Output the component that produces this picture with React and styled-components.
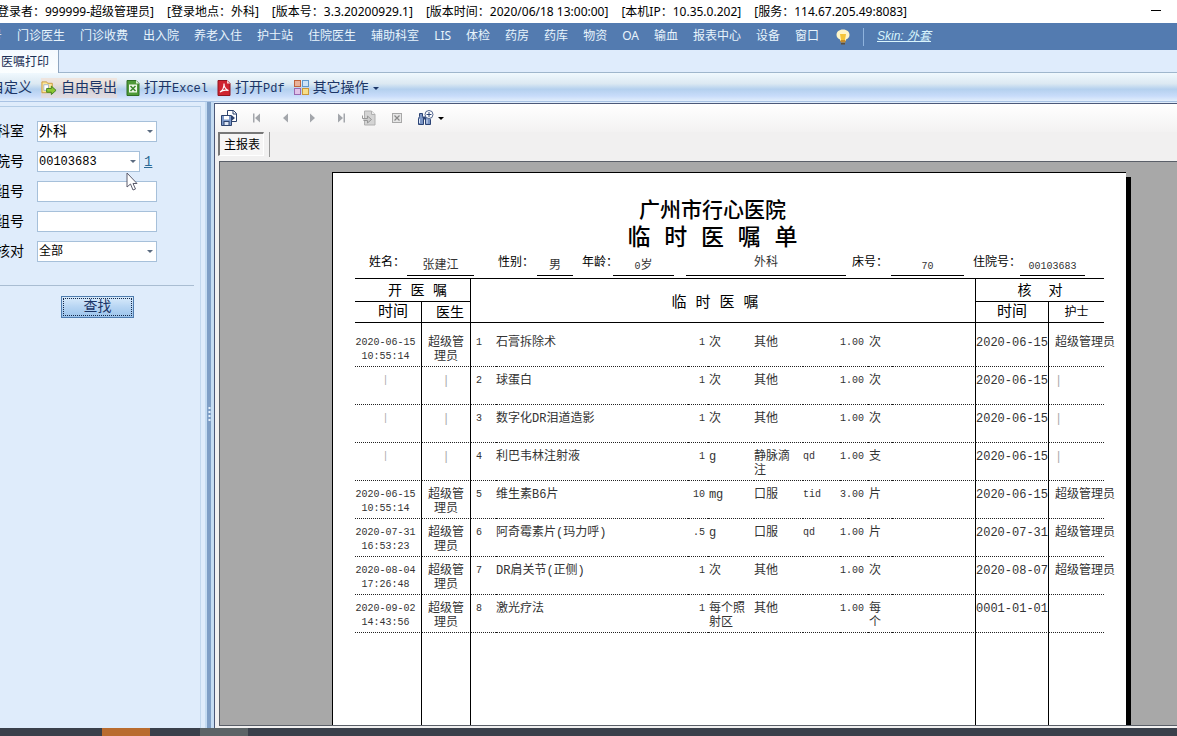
import React, { useState } from 'react';
import styled, { createGlobalStyle } from 'styled-components';

const GlobalStyle = createGlobalStyle`
  * {
    box-sizing: border-box;
  }

  body {
    margin: 0;
    overflow: hidden;
    font-family: 'Noto Sans', 'Noto Sans CJK SC', sans-serif;
    font-size: 12px;
    line-height: 16px;
    color: #000;
  }
`;

const songFont = `'Liberation Mono', 'Noto Sans CJK SC', monospace`;

const Window = styled.div`
  display: flex;
  flex-direction: column;
  height: 100vh;
  background: #dfecfb;
`;

// Title bar
const TitleBar = styled.header`
  display: flex;
  justify-content: space-between;
  height: 23px;
  flex: none;
  padding-top: 4px;
  padding-right: 15px;
  background: #fff;
  white-space: nowrap;
`;

const TitleInfo = styled.div`
  display: flex;
  gap: 13px;
  margin-left: -7px;
`;

const MinimizeButton = styled.button`
  width: 12px;
  height: 16px;
  padding: 0;
  border: none;
  background: none;

  svg {
    display: block;
  }
`;

// Menu
const MenuBar = styled.nav`
  display: flex;
  align-items: center;
  gap: 15px;
  height: 27px;
  flex: none;
  margin-left: -22px;
  background: #537bb0;
  color: #e8f4fc;
  white-space: nowrap;
`;

const MenuItem = styled.button`
  padding: 0 0 2px;
  border: none;
  background: none;
  color: inherit;
  font: inherit;
  line-height: 16px;
`;

const MenuTools = styled.div`
  display: flex;
  align-items: center;
  gap: 13px;
  margin-left: 2px;
`;

const MenuDivider = styled.span`
  width: 1px;
  height: 18px;
  background: #8fb3dd;
`;

const SkinLink = styled.a`
  color: #d8f4fc;
  font-family: 'Liberation Sans', 'Noto Sans CJK SC', sans-serif;
  font-style: italic;
  line-height: 20px;
  padding-bottom: 2px;
  text-decoration: underline;
`;

// Document tabs
const TabStrip = styled.div`
  display: flex;
  height: 23px;
  flex: none;
  border-bottom: 1px solid #9fb6cc;
  background: #dfecfc;
`;

const DocTab = styled.button`
  height: 23px;
  padding: 1px 9px 0 1px;
  border: none;
  border-right: 1px solid #8fa6c0;
  background: linear-gradient(#f4f9fe, #fbfeff);
  color: #1b2f55;
  font: inherit;
`;

const ActionBar = styled.div`
  display: flex;
  align-items: center;
  height: 29px;
  flex: none;
  gap: 9px;
  margin-left: -10px;
  padding-top: 2px;
  border-bottom: 1px solid #a9c3e4;
  background: linear-gradient(#f0f9fe 0%, #dce9f2 38%, #b4d0ee 58%, #c8dcfa 82%, #e2eefc 100%);
  white-space: nowrap;
`;

const Action = styled.button`
  display: flex;
  align-items: center;
  gap: 4px;
  padding: 0;
  border: none;
  background: ${(props) => (props.$active ? 'rgba(250, 214, 190, 0.45)' : 'none')};
  color: #1b3566;
  font: 14px/20px ${songFont};

  svg {
    flex: none;
  }
`;

const Latin = styled.span`
  font-size: 12px;
`;

// Body
const Body = styled.main`
  display: flex;
  flex: 1;
  min-height: 0;
`;

const SidePanel = styled.aside`
  width: 205px;
  flex: none;
  padding: 4px 4px 0 0;
`;

const FilterForm = styled.form`
  height: 100%;
  border-top: 1px solid #b4cde6;
  border-right: 1px solid #c3d8ee;
`;

const Fields = styled.div`
  display: grid;
  gap: 9px;
  margin-right: 6px;
  padding: 14px 0 23px;
  border-bottom: 1px solid #a9bdd2;
`;

const Field = styled.div`
  display: flex;
  align-items: center;
  height: 21px;
`;

const FieldLabel = styled.label`
  display: flex;
  justify-content: flex-end;
  width: 24px;
  margin-right: 13px;
  padding-top: 2px;
  font: 14px/21px ${songFont};
  white-space: nowrap;
`;

const ComboBox = styled.div`
  display: grid;
  align-items: center;
  width: ${(props) => (props.$short ? 103 : 120)}px;

  > * {
    grid-area: 1 / 1;
  }

  svg {
    justify-self: end;
    margin-right: 4px;
    pointer-events: none;
  }
`;

const Select = styled.select`
  appearance: none;
  width: 100%;
  height: 21px;
  padding: 1px 1px 0;
  border: 1px solid #a6c0da;
  border-radius: 0;
  background: #fff;
  color: #000;
  font: ${(props) => props.$size}px/18px ${songFont};
`;

const TextInput = styled.input`
  width: 120px;
  height: 21px;
  padding: 0 2px;
  border: 1px solid #a6c0da;
  background: #fff;
  font: 12px/19px ${songFont};
`;

const CountLink = styled.a`
  margin-left: 4px;
  color: #2c6a96;
  font: 14px/18px 'Liberation Mono', monospace;
`;

const SearchButton = styled.button`
  display: block;
  width: 73px;
  height: 22px;
  margin: 10px 0 0 61px;
  padding: 1px;
  border: 1px solid #4f7cae;
  background: linear-gradient(#d9ebfb, #b7d5f3 50%, #9cc4ec);
  color: #1b3566;
  font: 14px/17px ${songFont};

  span {
    display: block;
    height: 18px;
    border: 1px dotted #16284a;
  }
`;

const Splitter = styled.div`
  display: flex;
  align-items: center;
  justify-content: center;
  width: 9px;
  flex: none;
  border: solid #c5dcf2;
  border-width: 0 3px 0 2px;
  background: #7f9fc6;

  svg {
    flex: none;
  }
`;

// Report viewer
const Viewer = styled.section`
  display: flex;
  flex-direction: column;
  flex: 1;
  min-width: 0;
  margin-top: 1px;
  border-top: 1px solid #4b5878;
  border-left: 1px solid #4b5878;
  background: #f1f0f0;
`;

const ViewerBar = styled.div`
  display: flex;
  align-items: center;
  gap: 12px;
  height: 28px;
  flex: none;
  padding-left: 6px;
  background: linear-gradient(#fff, #f3f2f2);
`;

const IconButton = styled.button`
  display: flex;
  align-items: center;
  gap: 4px;
  padding: 0;
  border: none;
  background: none;
`;

const ReportTabs = styled.div`
  display: flex;
  gap: 5px;
  height: 29px;
  flex: none;
  padding-left: 3px;
`;

const ReportTab = styled.button`
  height: 24px;
  padding: 1px 3px 0 4px;
  border: solid;
  border-width: 2px 1px 1px 2px;
  border-color: #777 #fff #fff #777;
  background: #f6f5f5;
  font: inherit;
`;

const TabDivider = styled.span`
  width: 1px;
  height: 25px;
  background: #999;
`;

const Canvas = styled.div`
  display: flex;
  flex: 1;
  min-height: 0;
  margin: 0 0 2px 4px;
  padding: 10px 51px 0 112px;
  overflow: hidden;
  border: solid #5a5f68;
  border-width: 1px 0 1px 1px;
  background: #a8a8a8;
`;

const Page = styled.article`
  display: flex;
  flex-direction: column;
  flex: 1;
  padding: 24px 22px 0;
  border: solid #000;
  border-width: 1px 0 0 1px;
  background: #fff;
  box-shadow: 5px 5px 0 #000;
  font-family: ${songFont};
`;

const Heading = styled.header`
  height: 54px;
  margin-right: 34px;
  padding-top: 1px;
  text-align: center;
`;

const Hospital = styled.h1`
  margin: 0;
  font: 500 21px/27px ${songFont};
`;

const ReportTitle = styled.h2`
  margin: 0;
  font: 500 23px/28px ${songFont};
`;

const Patient = styled.dl`
  display: grid;
  grid-template-columns: 38px 67px 63px 36px 40px 61px 1fr 45px 73px 56px 65px;
  height: 24px;
  margin: 0 19px 3px 14px;
`;

const Term = styled.dt`
  padding: 4px 0 0 ${(props) => props.$indent || 0}px;
  white-space: nowrap;
`;

const Detail = styled.dd`
  margin: 0 0 0 ${(props) => props.$indent || 0}px;
  padding-top: ${(props) => (props.$raised ? 4 : 7)}px;
  border-bottom: 1px solid #000;
  color: #333;
  line-height: 16px;
  text-align: center;

  span {
    font-size: 10px;
  }
`;

const OrderTable = styled.table`
  flex: 1;
  width: 100%;
  table-layout: fixed;
  border-spacing: 0;
  border-top: 1px solid #000;
  font-size: 12px;
  line-height: 14px;
`;

const Th = styled.th`
  height: ${(props) => (props.$sub ? 21 : 23)}px;
  padding: ${(props) => props.$top || 1}px ${(props) => props.$right || 0}px 0 ${(props) => props.$left || 0}px;
  border: solid #000;
  border-width: 0 ${(props) => (props.$last ? 0 : 1)}px 1px 0;
  font-size: ${(props) => props.$size || 14}px;
  font-weight: 400;
  line-height: 18px;
  white-space: pre;
`;

const Row = styled.tr`
  height: ${(props) => (props.$first ? 44 : 38)}px;

  td {
    padding-top: ${(props) => (props.$first ? 13 : 7)}px;
  }
`;

const Td = styled.td`
  padding: 0 ${(props) => props.$right || 0}px 0 ${(props) => props.$left || 0}px;
  border: 0 solid #000;
  border-right-width: ${(props) => (props.$line ? 1 : 0)}px;
  border-bottom: 1px dotted #222;
  color: ${(props) => (props.$dim ? '#aaa' : '#333')};
  text-align: ${(props) => props.$align || 'left'};
  vertical-align: top;
  white-space: ${(props) => (props.$wrap ? 'normal' : 'nowrap')};
`;

const Small = styled(Td)`
  font-size: 10px;
`;

const Blank = styled.td`
  padding: 0;
  border-right: ${(props) => (props.$last ? 'none' : '1px solid #000')};
`;

const Taskbar = styled.footer`
  display: flex;
  gap: 50px;
  height: 8px;
  flex: none;
  padding-left: 102px;
  background: #3a404b;
`;

const TaskButton = styled.button`
  width: 48px;
  height: 8px;
  padding: 0;
  border: none;
  background: ${(props) => props.$color};
`;

const Pointer = styled.svg`
  position: absolute;
  left: 126px;
  top: 172px;
`;

const menus = [
  '挂号', '门诊医生', '门诊收费', '出入院', '养老入住', '护士站', '住院医生', '辅助科室', 'LIS',
  '体检', '药房', '药库', '物资', 'OA', '输血', '报表中心', '设备', '窗口',
];

const status = [
  '[登录者：999999-超级管理员]',
  '[登录地点：外科]',
  '[版本号：3.3.20200929.1]',
  '[版本时间：2020/06/18 13:00:00]',
  '[本机IP：10.35.0.202]',
  '[服务：114.67.205.49:8083]',
];

const admin = '超级管理员';

const orders = [
  { time: '2020-06-15 10:55:14', name: '石膏拆除术', dose: '1', unit: '次', route: '其他', qty: '1.00', pack: '次', check: '2020-06-15', nurse: admin },
  { name: '球蛋白', dose: '1', unit: '次', route: '其他', qty: '1.00', pack: '次', check: '2020-06-15' },
  { name: '数字化DR泪道造影', dose: '1', unit: '次', route: '其他', qty: '1.00', pack: '次', check: '2020-06-15' },
  { name: '利巴韦林注射液', dose: '1', unit: 'g', route: '静脉滴注', freq: 'qd', qty: '1.00', pack: '支', check: '2020-06-15' },
  { time: '2020-06-15 10:55:14', name: '维生素B6片', dose: '10', unit: 'mg', route: '口服', freq: 'tid', qty: '3.00', pack: '片', check: '2020-06-15', nurse: admin },
  { time: '2020-07-31 16:53:23', name: '阿奇霉素片(玛力呼)', dose: '.5', unit: 'g', route: '口服', freq: 'qd', qty: '1.00', pack: '片', check: '2020-07-31', nurse: admin },
  { time: '2020-08-04 17:26:48', name: 'DR肩关节(正侧)', dose: '1', unit: '次', route: '其他', qty: '1.00', pack: '次', check: '2020-08-07', nurse: admin },
  { time: '2020-09-02 14:43:56', name: '激光疗法', dose: '1', unit: '每个照射区', route: '其他', qty: '1.00', pack: '每个', check: '0001-01-01', nurse: ' ' },
];

const columns = [67, 49, 25, null, 20, 46, 49, 37, 28, 24, 84, 73, 55];

const BulbIcon = () => (
  <svg width="14" height="16" viewBox="0 0 14 16">
    <path d="M7 .5C3 .5.500 2.800.500 6c0 2.300 1.500 3.500 3.500 4.500V12h6v-1.500c2-1 3.500-2.200 3.500-4.500C13.500 2.800 11 .5 7 .5z" fill="#fff6c8" />
    <path d="M4 5h6l-1 6H5z" fill="#f4c53a" />
    <path d="M4.500 11h5v2.500h-5z" fill="#c78d2a" />
    <path d="M5 14h4v1.500H5z" fill="#5d4d3a" />
  </svg>
);

const ExportIcon = () => (
  <svg width="16" height="16" viewBox="0 0 17 16">
    <path d="M1 1.500h5l1 1.500h5v10H1z" fill="#fbe79a" stroke="#c99a3e" />
    <path d="M3 4.500h5v6H3z" fill="#fff" stroke="#a6b3c8" />
    <path d="M6 8.500h5V6l5 4.500-5 4.500v-2.500H6z" fill="#8cc832" stroke="#3f7f1e" />
  </svg>
);

const ExcelIcon = () => (
  <svg width="14" height="16" viewBox="0 0 13 16">
    <path d="M.5.5h9l3 3v12H.5z" fill="#4f9a38" stroke="#2f6f24" />
    <path d="M9.500.5v3h3z" fill="#dff0d6" />
    <rect x="2.500" y="4.500" width="8" height="8" fill="#f0f8ea" />
    <path d="M4 6l5 5M9 6l-5 5" stroke="#3b842c" strokeWidth="1.500" />
  </svg>
);

const PdfIcon = () => (
  <svg width="14" height="16" viewBox="0 0 13 16">
    <path d="M.5.5h9l3 3v12H.5z" fill="#cf2430" stroke="#8f1620" />
    <path d="M9.500.5v3h3z" fill="#f5d5d5" />
    <path d="M2.500 12c2-1 4-4.500 4-8.500 0 4 2 6 4.500 7-3-.8-6-.3-8.500 1.500z" fill="none" stroke="#fff" strokeWidth="1.100" />
  </svg>
);

const GridIcon = () => (
  <svg width="15" height="16" viewBox="0 0 15 16">
    <rect x=".5" y=".5" width="6" height="6" fill="#e9b29a" stroke="#c0643c" />
    <rect x="8.500" y=".5" width="6" height="6" fill="#cde3f8" stroke="#5f97cc" />
    <rect x=".5" y="8.500" width="6" height="6" fill="#e0c3e8" stroke="#9a68b0" />
    <rect x="8.500" y="8.500" width="6" height="6" fill="#f7df88" stroke="#c9973a" />
  </svg>
);

const Caret = ({ color = '#333' }) => (
  <svg width="6" height="3" viewBox="0 0 6 3">
    <path d="M0 0h6L3 3z" fill={color} />
  </svg>
);

const SavePageIcon = () => (
  <svg width="16" height="16" viewBox="0 0 16 16">
    <path d="M6.500.5h6l3 3v8h-9z" fill="#fff" stroke="#2d436e" />
    <path d="M12 .5v3.500h3.500" fill="none" stroke="#2d436e" />
    <path d="M11 5.500l3 2.500-3 2.500z" fill="#2d436e" />
    <path d="M.5 5.500h10v10H.5z" fill="#7d9acb" stroke="#2d436e" />
    <rect x="3" y="6" width="5" height="3.500" fill="#fff" />
    <rect x="3" y="11.500" width="5" height="4" fill="#dfe7f5" stroke="#2d436e" />
  </svg>
);

const StepIcon = ({ flip, bar }) => (
  <svg width="16" height="16" viewBox="0 0 16 16">
    <g transform={flip ? 'translate(16 0) scale(-1 1)' : undefined} fill="#a3a6ab">
      <path d="M11 3.500v9L6 8z" />
      {bar && <rect x="4" y="3.500" width="1.500" height="9" />}
    </g>
  </svg>
);

const GotoIcon = () => (
  <svg width="16" height="16" viewBox="0 0 16 16">
    <path d="M3.500 1h7l3.500 3.500V15H3.500z" fill="#d4d4d4" stroke="#b0b0b0" />
    <path d="M10.500 1v3.500H14" fill="#eee" stroke="#b0b0b0" />
    <path d="M1.500 5.500v3h5V6l4 3.500-4 3.500v-2.500h-4" fill="#ccc" stroke="#979797" />
  </svg>
);

const StopIcon = () => (
  <svg width="16" height="16" viewBox="0 0 16 16">
    <rect x="3.500" y="3.500" width="9" height="9" fill="#e6e6e6" stroke="#a8a8a8" />
    <path d="M5.500 5.500l5 5M10.500 5.500l-5 5" stroke="#8a8a8a" strokeWidth="1.200" />
  </svg>
);

const FindIcon = () => (
  <svg width="17" height="16" viewBox="0 0 17 16">
    <path d="M2.500 3.500h3v3l1 2v6h-5v-6l1-2zM9 5.500h3v2l1.500 2v5h-5v-6z" fill="#7b95c4" stroke="#2c4475" />
    <path d="M6 6.500h3v3H6z" fill="#2c4475" />
    <path d="M2.500 9v4M10 9.500v4" stroke="#dce7fa" />
    <circle cx="12" cy="4.500" r="4" fill="#fff" stroke="#53678f" />
    <path d="M12 2v5M9.500 4.500h5" stroke="#2c4475" />
  </svg>
);

function OrderRow({ order, index }) {
  const mark = '|';
  const [date, clock] = order.time ? order.time.split(' ') : [];

  return (
    <Row $first={index === 0}>
      <Small $line $align="center" $right={5} $dim={!order.time}>
        {order.time ? <>{date}<br />{clock}</> : mark}
      </Small>
      <Td $line $align="center" $dim={!order.time}>
        {order.time ? <>超级管<br />理员</> : mark}
      </Td>
      <Small $left={5}>{index + 1}</Small>
      <Td>{order.name}</Td>
      <Small $align="right" $right={3}>{order.dose}</Small>
      <Td $wrap $left={1} $right={8}>{order.unit}</Td>
      <Td $wrap $right={12}>{order.route}</Td>
      <Small>{order.freq}</Small>
      <Small>{order.qty}</Small>
      <Td $wrap $left={1} $right={8}>{order.pack}</Td>
      <Td $line />
      <Td $line $align="center">{order.check}</Td>
      <Td $left={6} $dim={!order.nurse}>{order.nurse || mark}</Td>
    </Row>
  );
}

function Report() {
  return (
    <Page>
      <Heading>
        <Hospital>广州市行心医院</Hospital>
        <ReportTitle>临 时 医 嘱 单</ReportTitle>
      </Heading>
      <Patient>
        <Term>姓名：</Term>
        <Detail>张建江</Detail>
        <Term $indent={24}>性别：</Term>
        <Detail>男</Detail>
        <Term $indent={9}>年龄：</Term>
        <Detail><span>0</span>岁</Detail>
        <Detail $raised $indent={12}>外科</Detail>
        <Term $indent={6}>床号：</Term>
        <Detail><span>70</span></Detail>
        <Term $indent={9}>住院号：</Term>
        <Detail><span>00103683</span></Detail>
      </Patient>
      <OrderTable>
        <colgroup>
          {columns.map((width, i) => <col key={i} width={width || undefined} />)}
        </colgroup>
        <thead>
          <tr>
            <Th colSpan={2} $left={10}>开 医 嘱</Th>
            <Th colSpan={9} rowSpan={2} $size={15} $top={6} $right={16}>临 时 医 嘱</Th>
            <Th colSpan={2} $last>核  对</Th>
          </tr>
          <tr>
            <Th $sub $size={15} $left={10}>时间</Th>
            <Th $sub $left={8}>医生</Th>
            <Th $sub $size={15}>时间</Th>
            <Th $sub $last $size={12}>护士</Th>
          </tr>
        </thead>
        <tbody>
          {orders.map((order, i) => <OrderRow key={i} order={order} index={i} />)}
          <tr>
            <Blank />
            <Blank />
            <Blank colSpan={9} />
            <Blank />
            <Blank $last />
          </tr>
        </tbody>
      </OrderTable>
    </Page>
  );
}

function Filters() {
  const [dept, setDept] = useState('外科');
  const [state, setState] = useState('全部');

  return (
    <SidePanel>
      <FilterForm onSubmit={(e) => e.preventDefault()}>
        <Fields>
          <Field>
            <FieldLabel htmlFor="dept">科室</FieldLabel>
            <ComboBox>
              <Select id="dept" $size={14} value={dept} onChange={(e) => setDept(e.target.value)}>
                <option>外科</option>
              </Select>
              <Caret color="#5b6b80" />
            </ComboBox>
          </Field>
          <Field>
            <FieldLabel htmlFor="admission">住院号</FieldLabel>
            <ComboBox $short>
              <Select id="admission" $size={12} defaultValue="00103683">
                <option>00103683</option>
              </Select>
              <Caret color="#5b6b80" />
            </ComboBox>
            <CountLink href="#count">1</CountLink>
          </Field>
          <Field>
            <FieldLabel htmlFor="groupFrom">组号</FieldLabel>
            <TextInput id="groupFrom" type="text" />
          </Field>
          <Field>
            <FieldLabel htmlFor="groupTo">组号</FieldLabel>
            <TextInput id="groupTo" type="text" />
          </Field>
          <Field>
            <FieldLabel htmlFor="checked">核对</FieldLabel>
            <ComboBox>
              <Select id="checked" $size={12} value={state} onChange={(e) => setState(e.target.value)}>
                <option>全部</option>
              </Select>
              <Caret color="#5b6b80" />
            </ComboBox>
          </Field>
        </Fields>
        <SearchButton type="submit"><span>查找</span></SearchButton>
      </FilterForm>
    </SidePanel>
  );
}

function App() {
  return (
    <Window>
      <GlobalStyle />
      <TitleBar>
        <TitleInfo>
          {status.map((text) => <span key={text}>{text}</span>)}
        </TitleInfo>
        <MinimizeButton aria-label="最小化">
          <svg width="12" height="16"><path d="M1 6.500h10" stroke="#000" /></svg>
        </MinimizeButton>
      </TitleBar>
      <MenuBar>
        {menus.map((name) => <MenuItem key={name}>{name}</MenuItem>)}
        <MenuTools>
          <BulbIcon />
          <MenuDivider />
          <SkinLink href="#skin">Skin: 外套</SkinLink>
        </MenuTools>
      </MenuBar>
      <TabStrip>
        <DocTab>医嘱打印</DocTab>
      </TabStrip>
      <ActionBar>
        <Action>自定义</Action>
        <Action $active><ExportIcon />自由导出</Action>
        <Action><ExcelIcon /><span>打开<Latin>Excel</Latin></span></Action>
        <Action><PdfIcon /><span>打开<Latin>Pdf</Latin></span></Action>
        <Action><GridIcon />其它操作<Caret color="#1b3566" /></Action>
      </ActionBar>
      <Body>
        <Filters />
        <Splitter>
          <svg width="3" height="16" viewBox="0 0 3 16">
            <path d="M1.500 0v16" stroke="#e6f1fd" strokeWidth="2" strokeDasharray="2 2" />
          </svg>
        </Splitter>
        <Viewer>
          <ViewerBar>
            <IconButton aria-label="导出"><SavePageIcon /></IconButton>
            <IconButton aria-label="首页"><StepIcon bar /></IconButton>
            <IconButton aria-label="上一页"><StepIcon /></IconButton>
            <IconButton aria-label="下一页"><StepIcon flip /></IconButton>
            <IconButton aria-label="末页"><StepIcon flip bar /></IconButton>
            <IconButton aria-label="转到"><GotoIcon /></IconButton>
            <IconButton aria-label="停止"><StopIcon /></IconButton>
            <IconButton aria-label="查找文本"><FindIcon /><Caret color="#000" /></IconButton>
          </ViewerBar>
          <ReportTabs>
            <ReportTab>主报表</ReportTab>
            <TabDivider />
          </ReportTabs>
          <Canvas>
            <Report />
          </Canvas>
        </Viewer>
      </Body>
      <Taskbar>
        <TaskButton $color="#b96c2f" aria-label="任务一" />
        <TaskButton $color="#5c6467" aria-label="任务二" />
      </Taskbar>
      <Pointer width="12" height="20" viewBox="0 0 12 20">
        <path d="M1 1v14l3.500-3 2.500 6 2.500-1-2.500-5.500H11z" fill="#fff" stroke="#5c5c6c" />
      </Pointer>
    </Window>
  );
}

export default App;
